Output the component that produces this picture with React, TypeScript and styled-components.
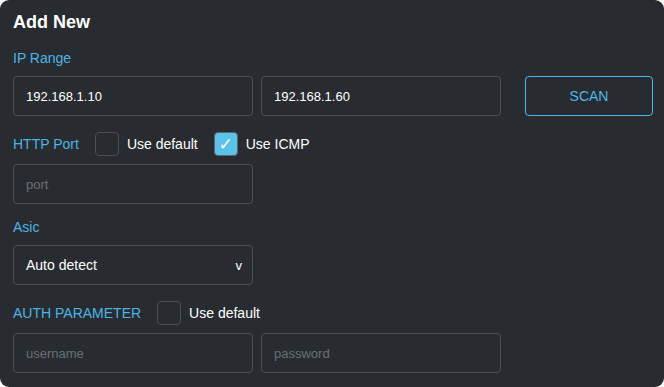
import React, { useState } from 'react';
import styled, { createGlobalStyle } from 'styled-components';

const GlobalStyle = createGlobalStyle`
    body {
        margin: 0;
        background: #ffffff;
        font-family: 'Liberation Sans', Arial, sans-serif;
    }
`;

const Panel = styled.div`
    width: 664px;
    height: 387px;
    box-sizing: border-box;
    background: #282c31;
    border-radius: 9px;
    padding: 10px 11px 14px 13px;
    display: flex;
    flex-direction: column;
    color: #ffffff;
`;

const Title = styled.h2`
    margin: 0;
    font-size: 18px;
    font-weight: 700;
    line-height: 24px;
`;

const Label = styled.div<{ $top: number }>`
    margin-top: ${({ $top }) => $top}px;
    font-size: 14px;
    line-height: 20px;
    color: #4db3e4;
`;

const Row = styled.div<{ $top: number }>`
    display: flex;
    align-items: center;
    margin-top: ${({ $top }) => $top}px;
    gap: 8px;
`;

const InlineLabel = styled.span`
    font-size: 14px;
    color: #4db3e4;
    margin-right: 8px;
`;

const Field = styled.input`
    width: 240px;
    height: 40px;
    box-sizing: border-box;
    background: transparent;
    border: 1px solid #4b4f55;
    border-radius: 4px;
    padding: 0 12px;
    font-family: inherit;
    font-size: 13px;
    color: #ffffff;
    outline: none;

    &::placeholder {
        color: #6b6f74;
    }
`;

const ScanButton = styled.button`
    width: 128px;
    height: 40px;
    margin-left: 16px;
    background: transparent;
    border: 1px solid #4db8e8;
    border-radius: 4px;
    font-family: inherit;
    font-size: 14px;
    color: #4db8e8;
    cursor: pointer;
`;

const Box = styled.span<{ $checked: boolean }>`
    width: 24px;
    height: 24px;
    box-sizing: border-box;
    border-radius: 4px;
    border: 1px solid ${({ $checked }) => ($checked ? '#5c636b' : '#4b4f55')};
    background: ${({ $checked }) => ($checked ? '#5bc3ea' : 'transparent')};
    display: flex;
    align-items: center;
    justify-content: center;
    color: #ffffff;
    font-family: 'DejaVu Sans', sans-serif;
    font-size: 17px;
    line-height: 1;
`;

const CheckLabel = styled.label`
    display: flex;
    align-items: center;
    gap: 8px;
    font-size: 14px;
    color: #ffffff;
    cursor: pointer;
    margin-right: 8px;
`;

const Select = styled.div`
    width: 240px;
    height: 40px;
    box-sizing: border-box;
    border: 1px solid #4b4f55;
    border-radius: 4px;
    padding: 0 10px 0 12px;
    display: flex;
    align-items: center;
    justify-content: space-between;
    font-size: 14px;
    color: #ffffff;

    .arrow {
        font-size: 13px;
        margin-top: 1px;
    }
`;

interface CheckProps {
    text: string;
    initial?: boolean;
}

const Check = ({ text, initial = false }: CheckProps) => {
    const [checked, setChecked] = useState(initial);
    return (
        <CheckLabel onClick={() => setChecked(!checked)}>
            <Box $checked={checked}>{checked ? '✓' : ''}</Box>
            {text}
        </CheckLabel>
    );
};

export default function App() {
    return (
        <>
            <GlobalStyle />
            <Panel>
                <Title>Add New</Title>
                <Label $top={14}>IP Range</Label>
                <Row $top={8}>
                    <Field defaultValue="192.168.1.10" />
                    <Field defaultValue="192.168.1.60" />
                    <ScanButton>SCAN</ScanButton>
                </Row>
                <Row $top={16}>
                    <InlineLabel>HTTP Port</InlineLabel>
                    <Check text="Use default" />
                    <Check text="Use ICMP" initial />
                </Row>
                <Row $top={8}>
                    <Field placeholder="port" />
                </Row>
                <Label $top={13}>Asic</Label>
                <Row $top={8}>
                    <Select>
                        Auto detect
                        <span className="arrow">v</span>
                    </Select>
                </Row>
                <Row $top={16}>
                    <InlineLabel>AUTH PARAMETER</InlineLabel>
                    <Check text="Use default" />
                </Row>
                <Row $top={8}>
                    <Field placeholder="username" />
                    <Field placeholder="password" />
                </Row>
            </Panel>
        </>
    );
}
